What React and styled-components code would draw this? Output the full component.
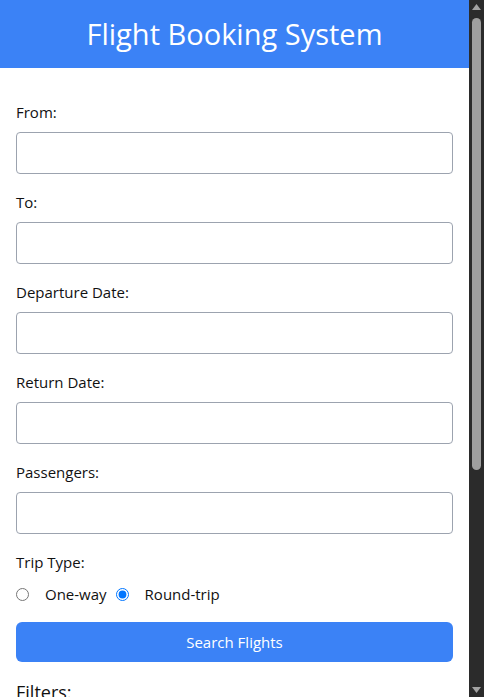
import React, { useState } from "react";
import styled, { createGlobalStyle } from "styled-components";

const Global = createGlobalStyle`
  html, body { margin: 0; padding: 0; background: #fff; height: 100%; overflow: hidden; }
  body { font-family: "Open Sans", "Noto Sans", Arial, sans-serif; color: #111; }
  #root { height: 100%; }
  * { box-sizing: border-box; }
`;

const Shell = styled.div`
  display: flex;
  height: 100vh;
`;

const Viewport = styled.div`
  flex: 1;
  min-width: 0;
  overflow: hidden;
`;

const ScrollTrack = styled.div`
  width: 15px;
  flex: 0 0 15px;
  display: flex;
  flex-direction: column;
  align-items: center;
  background: #2b2b2b;
`;

const ArrowBtn = styled.div`
  height: 15px;
  width: 15px;
  display: flex;
  align-items: ${(p) => (p.$down ? "flex-end" : "flex-start")};
  justify-content: center;
  padding: ${(p) => (p.$down ? "0 0 4px 0" : "4px 0 0 0")};
  flex: 0 0 15px;
`;

const ThumbArea = styled.div`
  flex: 1;
  width: 100%;
  display: flex;
  justify-content: center;
  padding-top: 3px;
`;

const Thumb = styled.div`
  width: 9px;
  border-radius: 5px;
  background: #9f9f9f;
`;

const Header = styled.header`
  background: #3b82f6;
  padding: 16px;
  text-align: center;
`;

const Title = styled.h1`
  margin: 0;
  color: #fff;
  font-size: 29px;
  line-height: 36px;
  font-weight: 400;
`;

const Main = styled.main`
  padding: 32px 16px 32px;
`;

const Form = styled.form`
  display: flex;
  flex-direction: column;
  gap: 16px;
`;

const Field = styled.div`
  display: flex;
  flex-direction: column;
`;

const Label = styled.label`
  display: block;
  font-size: 15px;
  line-height: 24px;
  margin-bottom: 8px;
`;

const Input = styled.input`
  width: 100%;
  height: 42px;
  border: 1px solid #9ca3af;
  border-radius: 4px;
  padding: 8px 12px;
  font: inherit;
  font-size: 15px;
  background: #fff;
`;

const Select = styled.select`
  width: 100%;
  height: 42px;
  border: 1px solid #9ca3af;
  border-radius: 4px;
  padding: 8px 12px;
  font: inherit;
  font-size: 15px;
  background: #fff;
`;

const RadioRow = styled.div`
  display: flex;
  align-items: center;
  height: 24px;
`;

const Radio = styled.input`
  width: 13px;
  height: 13px;
  margin: 0 16px 0 0;
  accent-color: #0075ff;
`;

const RadioText = styled.span`
  font-size: 15px;
  line-height: 24px;
  margin-right: 9px;
`;

const Button = styled.button`
  width: 100%;
  height: 40px;
  border: none;
  border-radius: 6px;
  background: #3b82f6;
  color: #fff;
  font: inherit;
  font-size: 15px;
  cursor: pointer;
`;

const SectionTitle = styled.h2`
  margin: 0;
  font-size: 18px;
  line-height: 28px;
  font-weight: 400;
`;

const fields = ["From:", "To:", "Departure Date:", "Return Date:", "Passengers:"];

function Scrollbar({ thumb }) {
  return (
    <ScrollTrack aria-hidden="true">
      <ArrowBtn>
        <svg width="9" height="6" viewBox="0 0 9 6">
          <polygon points="4.5,0 9,6 0,6" fill="#a3a3a3" />
        </svg>
      </ArrowBtn>
      <ThumbArea>
        <Thumb style={{ height: thumb }} />
      </ThumbArea>
      <ArrowBtn $down>
        <svg width="9" height="6" viewBox="0 0 9 6">
          <polygon points="0,0 9,0 4.5,6" fill="#a3a3a3" />
        </svg>
      </ArrowBtn>
    </ScrollTrack>
  );
}

export default function App() {
  const [trip, setTrip] = useState("round");
  return (
    <>
      <Global />
      <Shell>
        <Viewport>
          <Header>
            <Title>Flight Booking System</Title>
          </Header>
          <Main>
            <Form onSubmit={(e) => e.preventDefault()}>
              {fields.map((f) => (
                <Field key={f}>
                  <Label>{f}</Label>
                  <Input type="text" />
                </Field>
              ))}
              <Field>
                <Label>Trip Type:</Label>
                <RadioRow>
                  <Radio
                    type="radio"
                    name="trip"
                    checked={trip === "one"}
                    onChange={() => setTrip("one")}
                  />
                  <RadioText>One-way</RadioText>
                  <Radio
                    type="radio"
                    name="trip"
                    checked={trip === "round"}
                    onChange={() => setTrip("round")}
                  />
                  <RadioText>Round-trip</RadioText>
                </RadioRow>
              </Field>
              <Button type="submit">Search Flights</Button>
              <SectionTitle>Filters:</SectionTitle>
              <Field>
                <Label>Max Price:</Label>
                <Input type="text" />
              </Field>
              <Field>
                <Label>Airline:</Label>
                <Select>
                  <option>All</option>
                </Select>
              </Field>
            </Form>
          </Main>
        </Viewport>
        <Scrollbar thumb={452} />
      </Shell>
    </>
  );
}
